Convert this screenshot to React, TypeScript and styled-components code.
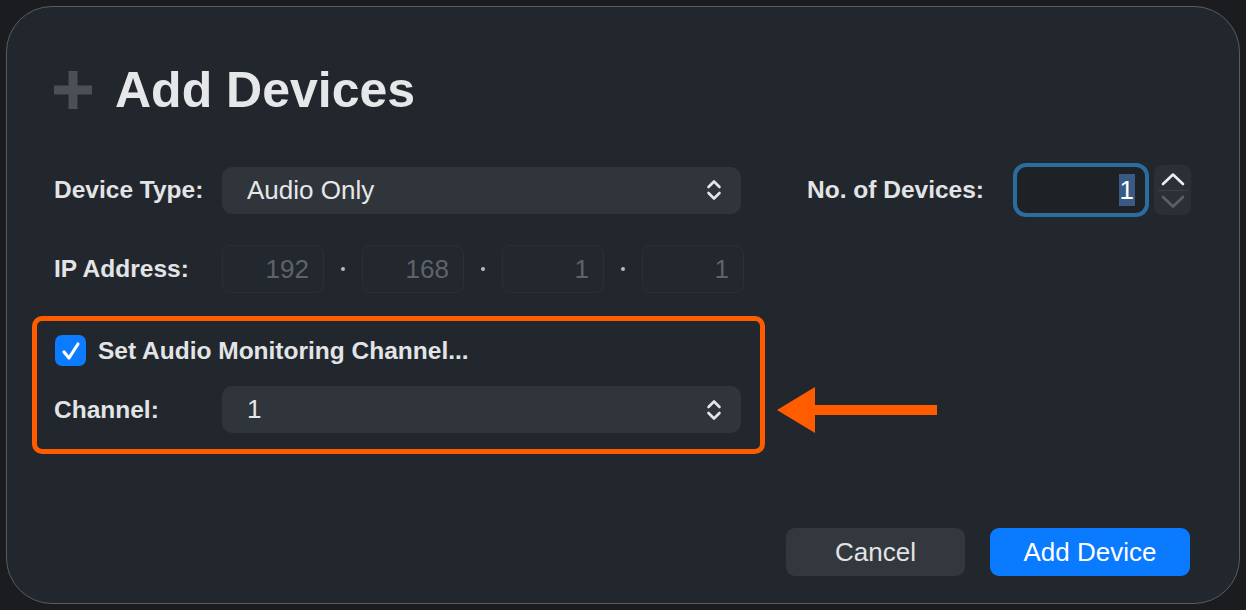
import { createGlobalStyle, styled } from 'styled-components';

const GlobalStyle = createGlobalStyle`
  html, body {
    margin: 0;
    padding: 0;
    background: #1b1c1f;
  }

  body {
    font-family: 'Liberation Sans', Arial, sans-serif;
    -webkit-font-smoothing: antialiased;
  }
`;

const ChevronUpDown = () => (
  <svg width="16" height="22" viewBox="0 0 16 22" fill="none">
    <path d="M2.5 8 L8 2.5 L13.5 8" stroke="#e4e5e7" strokeWidth="2.6" strokeLinecap="round" strokeLinejoin="round" />
    <path d="M2.5 14 L8 19.5 L13.5 14" stroke="#e4e5e7" strokeWidth="2.6" strokeLinecap="round" strokeLinejoin="round" />
  </svg>
);

const PlusIcon = () => (
  <svg width="38" height="38" viewBox="0 0 38 38">
    <rect x="14.5" y="0" width="9" height="38" fill="#4b5056" />
    <rect x="0" y="14.5" width="38" height="9" fill="#4b5056" />
  </svg>
);

const CheckIcon = () => (
  <svg width="22" height="22" viewBox="0 0 22 22" fill="none">
    <path d="M4 12 L9 18 L18 4" stroke="#fff" strokeWidth="3.2" strokeLinecap="round" strokeLinejoin="round" />
  </svg>
);

const LeftArrow = () => (
  <svg width="160" height="46" viewBox="0 0 160 46">
    <polygon points="0,23 38,0 38,46" fill="#ff5c00" />
    <rect x="36" y="18" width="124" height="10" fill="#ff5c00" />
  </svg>
);

const App = () => {
  const ipParts = ['192', '168', '1', '1'];

  return (
    <>
      <GlobalStyle />
      <S.Page>
        <S.Dialog>
          <S.Header>
            <PlusIcon />
            <S.Title>Add Devices</S.Title>
          </S.Header>

          <S.Row $top={43}>
            <S.Label>Device Type:</S.Label>
            <S.Select $width={519}>
              <span>Audio Only</span>
              <ChevronUpDown />
            </S.Select>
            <S.CountLabel>No. of Devices:</S.CountLabel>
            <S.NumberField>
              <S.Selected>1</S.Selected>
            </S.NumberField>
            <S.Stepper>
              <S.StepHalf>
                <svg width="26" height="16" viewBox="0 0 26 16" fill="none">
                  <path d="M3 13 L13 3.5 L23 13" stroke="#eceef0" strokeWidth="2.6" strokeLinecap="round" strokeLinejoin="round" />
                </svg>
              </S.StepHalf>
              <S.StepDivider />
              <S.StepHalf>
                <svg width="26" height="16" viewBox="0 0 26 16" fill="none">
                  <path d="M3 3 L13 12.5 L23 3" stroke="#5b6066" strokeWidth="2.6" strokeLinecap="round" strokeLinejoin="round" />
                </svg>
              </S.StepHalf>
            </S.Stepper>
          </S.Row>

          <S.Row $top={28}>
            <S.Label>IP Address:</S.Label>
            <S.IpGroup>
              {ipParts.map((part, i) => (
                <S.IpCell key={i}>
                  {i > 0 && <S.IpDot />}
                  <S.IpField>{part}</S.IpField>
                </S.IpCell>
              ))}
            </S.IpGroup>
          </S.Row>

          <S.Annotated>
            <S.Highlight>
              <S.CheckRow>
                <S.Checkbox>
                  <CheckIcon />
                </S.Checkbox>
                <S.CheckLabel>Set Audio Monitoring Channel...</S.CheckLabel>
              </S.CheckRow>
              <S.Row $top={20}>
                <S.Label>Channel:</S.Label>
                <S.Select $width={519}>
                  <span>1</span>
                  <ChevronUpDown />
                </S.Select>
              </S.Row>
            </S.Highlight>
            <S.ArrowWrap>
              <LeftArrow />
            </S.ArrowWrap>
          </S.Annotated>

          <S.Footer>
            <S.Button>Cancel</S.Button>
            <S.Button $primary>Add Device</S.Button>
          </S.Footer>
        </S.Dialog>
      </S.Page>
    </>
  );
};

const S = {
  Page: styled.div`
    width: 1246px;
    height: 610px;
    padding: 6px;
    box-sizing: border-box;
  `,

  Dialog: styled.div`
    width: 1234px;
    height: 598px;
    box-sizing: border-box;
    padding: 53px 49px 0 47px;
    border: 1.5px solid #585c61;
    border-radius: 46px;
    background: #22272e;
    display: flex;
    flex-direction: column;
  `,

  Header: styled.div`
    display: flex;
    align-items: center;
    gap: 23px;
    height: 60px;
  `,

  Title: styled.h1`
    margin: 0;
    font-size: 50px;
    line-height: 60px;
    font-weight: 700;
    color: #e6e7e9;
  `,

  Row: styled.div<{ $top: number }>`
    display: flex;
    align-items: center;
    margin-top: ${({ $top }) => $top}px;
  `,

  Label: styled.div`
    width: 168px;
    flex-shrink: 0;
    white-space: nowrap;
    font-size: 24.5px;
    font-weight: 700;
    color: #e3e4e6;
  `,

  Select: styled.div<{ $width: number }>`
    width: ${({ $width }) => $width}px;
    flex-shrink: 0;
    height: 47px;
    box-sizing: border-box;
    padding: 0 19px 0 25px;
    display: flex;
    align-items: center;
    justify-content: space-between;
    border-radius: 10px;
    background: #30353b;
    font-size: 26px;
    color: #e6e7e9;
  `,

  CountLabel: styled.div`
    margin-left: 66px;
    flex-shrink: 0;
    white-space: nowrap;
    font-size: 24.5px;
    font-weight: 700;
    color: #e3e4e6;
  `,

  NumberField: styled.div`
    margin-left: 29px;
    flex-shrink: 0;
    width: 136px;
    height: 54px;
    box-sizing: border-box;
    border: 4px solid #2c6d9f;
    border-radius: 13px;
    background: #1e2227;
    display: flex;
    align-items: center;
    justify-content: flex-end;
    padding-right: 10px;
  `,

  Selected: styled.span`
    background: #3a5a86;
    color: #ffffff;
    font-size: 26px;
    line-height: 32px;
    padding: 0 1px;
  `,

  Stepper: styled.div`
    margin-left: 5px;
    flex-shrink: 0;
    width: 37px;
    height: 50px;
    border-radius: 8px;
    background: #2b3036;
    display: flex;
    flex-direction: column;
    align-items: center;
    justify-content: center;
  `,

  StepHalf: styled.div`
    height: 22px;
    display: flex;
    align-items: center;
    justify-content: center;
  `,

  StepDivider: styled.div`
    width: 30px;
    height: 1px;
    background: #3b4046;
  `,

  IpGroup: styled.div`
    display: flex;
    align-items: center;
  `,

  IpCell: styled.div`
    display: flex;
    align-items: center;
  `,

  IpDot: styled.div`
    width: 4px;
    height: 4px;
    border-radius: 2px;
    background: #b8bcc1;
    margin: 0 17px;
  `,

  IpField: styled.div`
    width: 102px;
    height: 48px;
    box-sizing: border-box;
    border: 1.5px solid #2b3037;
    border-radius: 8px;
    background: #23282f;
    display: flex;
    align-items: center;
    justify-content: flex-end;
    padding-right: 14px;
    font-size: 26px;
    color: #5e6369;
  `,

  Annotated: styled.div`
    display: flex;
    align-items: flex-end;
    margin-top: 23px;
    margin-left: -22px;
  `,

  Highlight: styled.div`
    width: 733px;
    box-sizing: border-box;
    padding: 14px 19px 16px 17px;
    border: 5px solid #ff5c00;
    border-radius: 10px;
  `,

  CheckRow: styled.div`
    display: flex;
    align-items: center;
    gap: 12px;
    padding-left: 1px;
  `,

  Checkbox: styled.div`
    width: 31px;
    height: 31px;
    border-radius: 7px;
    background: #0b7bff;
    display: flex;
    align-items: center;
    justify-content: center;
  `,

  CheckLabel: styled.div`
    font-size: 24.5px;
    font-weight: 700;
    color: #e3e4e6;
  `,

  ArrowWrap: styled.div`
    display: flex;
    margin: 0 0 21px 12px;
  `,

  Footer: styled.div`
    display: flex;
    justify-content: flex-end;
    gap: 25px;
    margin-top: 74px;
  `,

  Button: styled.button<{ $primary?: boolean }>`
    height: 48px;
    padding: 0;
    width: ${({ $primary }) => ($primary ? '200px' : '179px')};
    border: none;
    border-radius: 9px;
    background: ${({ $primary }) => ($primary ? '#0a7aff' : '#33383e')};
    color: ${({ $primary }) => ($primary ? '#ffffff' : '#e2e3e5')};
    font-family: 'Liberation Sans', Arial, sans-serif;
    font-size: 26px;
  `,
};

export default App;
